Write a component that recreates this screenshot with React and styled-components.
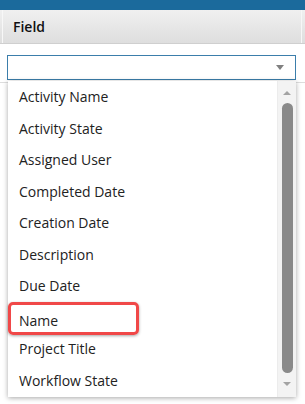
import styled, { createGlobalStyle } from "styled-components";

const GlobalStyle = createGlobalStyle`
  html, body {
    margin: 0;
    padding: 0;
    background: #fff;
  }
  body {
    font-family: "Open Sans", "Liberation Sans", sans-serif;
    color: #222;
  }
`;

const fields = [
  "Activity Name",
  "Activity State",
  "Assigned User",
  "Completed Date",
  "Creation Date",
  "Description",
  "Due Date",
  "Name",
  "Project Title",
  "Workflow State",
];

const Page = styled.div`
  position: relative;
  width: 305px;
  height: 404px;
  overflow: hidden;
`;

const TopBar = styled.div`
  height: 10px;
  background: #1b6a9c;
`;

const HeaderRow = styled.div`
  height: 33px;
  padding: 0 3px 0 2px;
  background: linear-gradient(#f0f0f0, #dedede);
  border-bottom: 1px solid #cfcfcf;
  display: flex;
`;

const HeaderCell = styled.div`
  flex: 1;
  display: flex;
  align-items: center;
  padding-left: 10px;
  border-left: 1px solid #f7f7f7;
  border-right: 1px solid #f7f7f7;
  font-size: 14px;
  font-weight: 600;
  color: #111;
`;

const FilterRow = styled.div`
  height: 39px;
  padding: 11px 0 0 7px;
  box-sizing: border-box;
  border-bottom: 1px solid #dddddd;
`;

const SelectBox = styled.div`
  width: 289px;
  height: 25px;
  box-sizing: border-box;
  border: 1px solid #3b7eab;
  display: flex;
  align-items: center;
  justify-content: flex-end;
  padding-right: 11px;
`;

const Caret = styled.span`
  width: 0;
  height: 0;
  border-left: 4.5px solid transparent;
  border-right: 4.5px solid transparent;
  border-top: 5px solid #808080;
`;

const Panel = styled.div`
  position: absolute;
  top: 81px;
  left: 8px;
  width: 288px;
  height: 316px;
  background: #fff;
  box-shadow: 0 1px 5px rgba(0, 0, 0, 0.35);
  display: flex;
`;

const List = styled.ul`
  flex: 1;
  margin: 0;
  padding: 0;
  list-style: none;
`;

const Item = styled.li`
  position: relative;
  height: 31.5px;
  box-sizing: border-box;
  display: flex;
  align-items: center;
  padding-left: 11px;
  padding-top: ${(p) => (p.$marked ? "7px" : "0")};
  font-size: 14px;
  color: #222;

  &::after {
    content: "";
    display: ${(p) => (p.$marked ? "block" : "none")};
    position: absolute;
    left: 0;
    top: 0;
    width: 131px;
    height: 33px;
    box-sizing: border-box;
    border: 3px solid #f04848;
    border-radius: 5px;
    box-shadow: 0 1px 3px rgba(0, 0, 0, 0.35);
  }
`;

const Scrollbar = styled.div`
  width: 19px;
  background: #f3f3f3;
  border-left: 1px solid #ececec;
  display: flex;
  flex-direction: column;
  align-items: center;
  padding-top: 10px;
  box-sizing: border-box;
`;

const Arrow = styled.span`
  width: 0;
  height: 0;
  border-left: 4px solid transparent;
  border-right: 4px solid transparent;
  ${(p) =>
    p.$up
      ? "border-bottom: 4px solid #a3a3a3;"
      : "border-top: 4px solid #a3a3a3;"}
`;

const Thumb = styled.div`
  width: 11px;
  height: 270px;
  margin: 8px 0 9px;
  background: #8a8a8a;
  border-radius: 6px;
`;

const App = () => {
  return (
    <Page>
      <GlobalStyle />
      <TopBar />
      <HeaderRow>
        <HeaderCell>Field</HeaderCell>
      </HeaderRow>
      <FilterRow>
        <SelectBox>
          <Caret />
        </SelectBox>
      </FilterRow>
      <Panel>
        <List>
          {fields.map((name) => (
            <Item key={name} $marked={name === "Name"}>
              {name}
            </Item>
          ))}
        </List>
        <Scrollbar>
          <Arrow $up />
          <Thumb />
          <Arrow />
        </Scrollbar>
      </Panel>
    </Page>
  );
};

export default App;
